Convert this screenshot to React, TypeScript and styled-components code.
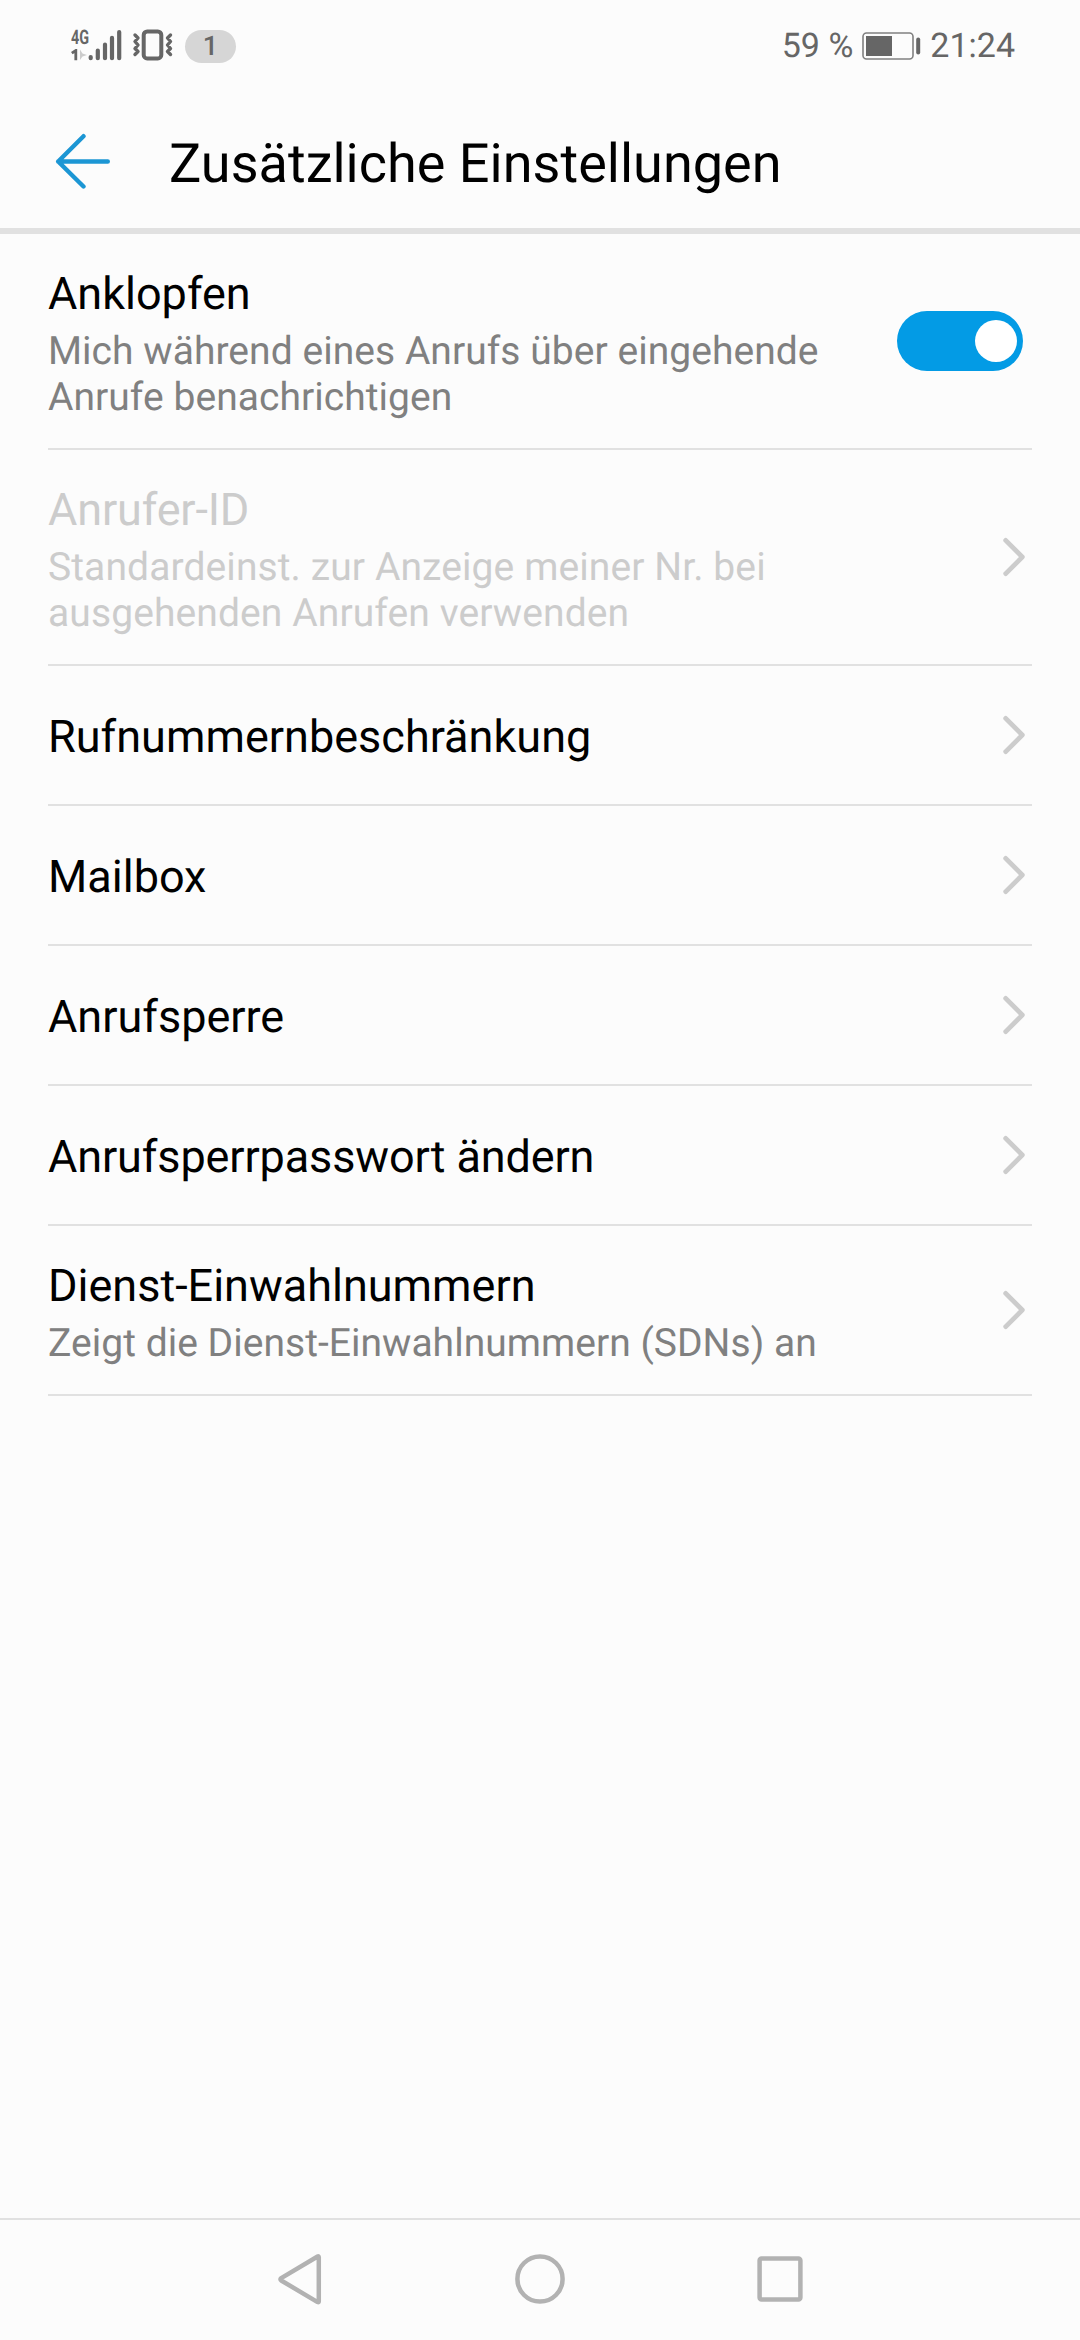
import React from 'react';
import styled, { createGlobalStyle } from 'styled-components';

const Global = createGlobalStyle`
  body { margin: 0; background: #fcfcfc; }
  * { box-sizing: border-box; }
`;

const Screen = styled.div`
  width: 1080px;
  height: 2340px;
  display: flex;
  flex-direction: column;
  overflow: hidden;
  background: #fcfcfc;
  color: #000;
  font-family: Roboto, sans-serif;
  text-rendering: geometricPrecision;
`;

const StatusBar = styled.div`
  height: 92px;
  padding: 0 65px 0 71px;
  display: flex;
  justify-content: space-between;
  align-items: center;
  color: #666;
  font-size: 34px;
  line-height: 40px;
`;

const StatusGroup = styled.div`
  display: flex;
  align-items: center;
`;

const Network = styled.div`
  display: flex;
  align-items: flex-end;
  width: 51px;
  height: 34px;
  margin-bottom: 4px;
`;

const NetworkLabels = styled.div`
  width: 17px;
  height: 34px;
  padding-top: 1px;
  display: flex;
  flex-direction: column;
  justify-content: space-between;
`;

const NetworkType = styled.span`
  font-size: 20px;
  line-height: 18px;
  font-weight: 700;
  transform: scaleX(0.72);
  transform-origin: left;
`;

const VibrateIcon = styled.svg`
  margin-left: 10px;
`;

const CountPill = styled.span`
  width: 51px;
  height: 33px;
  margin-left: 11px;
  border-radius: 17px;
  background: #d6d6d6;
  display: flex;
  align-items: center;
  justify-content: center;
  font-size: 27px;
  line-height: 33px;
  font-weight: 500;
`;

const BatteryIcon = styled.svg`
  margin: 0 9px 0 9px;
`;

const Header = styled.header`
  height: 142px;
  padding: 2px 48px 0 55px;
  display: flex;
  align-items: center;
  border-bottom: 6px solid #e1e1e1;
`;

const Title = styled.h1`
  margin: 8px 0 0 58px;
  font-size: 54px;
  line-height: 64px;
  font-weight: 400;
  letter-spacing: 0.02px;
`;

const List = styled.main`
  flex: 1;
  padding: 0 48px;
`;

const Row = styled.div<{ $height: number; $disabled?: boolean }>`
  height: ${(p) => p.$height}px;
  padding-right: 7px;
  display: flex;
  justify-content: space-between;
  align-items: center;
  border-bottom: 2px solid #e1e1e1;
  color: ${(p) => (p.$disabled ? '#ccc' : '#000')};
`;

const RowText = styled.div<{ $single: boolean }>`
  padding-top: ${(p) => (p.$single ? 3 : 5)}px;
`;

const RowTitle = styled.div<{ $tracking?: number }>`
  font-size: 45px;
  line-height: 53px;
  letter-spacing: ${(p) => p.$tracking ?? 0}px;
`;

const RowSummary = styled.div<{ $disabled?: boolean; $tracking?: number }>`
  width: 800px;
  margin-top: 8px;
  font-size: 39px;
  line-height: 46px;
  letter-spacing: ${(p) => p.$tracking ?? 0}px;
  color: ${(p) => (p.$disabled ? '#ccc' : '#808080')};
`;

const Switch = styled.span`
  width: 126px;
  height: 60px;
  margin-right: 2px;
  padding: 0 6px;
  border-radius: 30px;
  background: #039be5;
  display: flex;
  align-items: center;
  justify-content: flex-end;
`;

const Knob = styled.span`
  width: 42px;
  height: 42px;
  border-radius: 50%;
  background: #fff;
`;

const NavBar = styled.nav`
  height: 122px;
  border-top: 2px solid #e1e1e1;
  padding: 0 270px 2px;
  display: flex;
  justify-content: space-between;
  align-items: center;
`;

interface Item {
  title: string;
  summary?: string;
  height: number;
  disabled?: boolean;
  toggle?: boolean;
  titleTracking?: number;
  summaryTracking?: number;
}

const items: Item[] = [
  { title: 'Anklopfen', summary: 'Mich während eines Anrufs über eingehende Anrufe benachrichtigen', height: 216, toggle: true, summaryTracking: 0.045 },
  { title: 'Anrufer-ID', summary: 'Standardeinst. zur Anzeige meiner Nr. bei ausgehenden Anrufen verwenden', height: 216, disabled: true, titleTracking: -0.15, summaryTracking: 0.1 },
  { title: 'Rufnummernbeschränkung', height: 140, titleTracking: 0.02 },
  { title: 'Mailbox', height: 140 },
  { title: 'Anrufsperre', height: 140 },
  { title: 'Anrufsperrpasswort ändern', height: 140, titleTracking: -0.12 },
  { title: 'Dienst-Einwahlnummern', summary: 'Zeigt die Dienst-Einwahlnummern (SDNs) an', height: 170, summaryTracking: 0.03 },
];

const Chevron = () => (
  <svg width="24" height="40" viewBox="0 0 24 40" fill="none" stroke="#ccc" strokeWidth="4.8" strokeLinecap="round" strokeLinejoin="round">
    <path d="M4.700 3.400 21.300 20 4.700 36.600" />
  </svg>
);

export default function App() {
  return (
    <Screen>
      <Global />
      <StatusBar>
        <StatusGroup>
          <Network>
            <NetworkLabels>
              <NetworkType>4G</NetworkType>
              <svg width="17" height="12" viewBox="0 0 17 12">
                <path d="M.8 4.200 4.800 1.500V11.300" fill="none" stroke="#666" strokeWidth="2.800" />
                <path d="M9 .5v10.500l2.500-3.500L16 6l-4.500-1.500z" fill="#ccc" />
              </svg>
            </NetworkLabels>
            <svg width="34" height="32" viewBox="0 0 34 32" stroke="#666" strokeWidth="4.200" strokeLinecap="round">
              <path d="M2.700 28v1.200M9.800 21.500v7.700M17 15.500v13.700M24 8.800v20.400M31.200 3v26.200" />
            </svg>
          </Network>
          <VibrateIcon width="42" height="34" viewBox="0 0 42 34" fill="none" stroke="#666" strokeLinejoin="round" strokeLinecap="round">
            <rect x="11.700" y="2.400" width="17.600" height="27" rx="3.500" strokeWidth="4" />
            <path d="M3 6 6 9 3 12.500 6 16 3 19.500 6 22.500 3 25.500M38.500 6 35.500 9 38.500 12.500 35.500 16 38.500 19.500 35.500 22.500 38.500 25.500" strokeWidth="3.400" />
          </VibrateIcon>
          <CountPill>1</CountPill>
        </StatusGroup>
        <StatusGroup>
          <span>59 %</span>
          <BatteryIcon width="59" height="28" viewBox="0 0 59 28">
            <rect x="1" y="1" width="50" height="26" rx="3.500" fill="none" stroke="#808080" strokeWidth="1.600" />
            <rect x="4" y="4" width="26" height="20" fill="#666" />
            <path d="M56.200 7.500v13" stroke="#666" strokeWidth="4" strokeLinecap="round" />
          </BatteryIcon>
          <span>21:24</span>
        </StatusGroup>
      </StatusBar>
      <Header>
        <svg width="56" height="56" viewBox="0 0 56 56" fill="none" stroke="#1c96d4" strokeWidth="4.400" strokeLinecap="round" strokeLinejoin="round">
          <path d="M28.500 3.200 3.200 28.500l25.300 25M3.200 28.500h49.600" />
        </svg>
        <Title>Zusätzliche Einstellungen</Title>
      </Header>
      <List>
        {items.map((it) => (
          <Row key={it.title} $height={it.height} $disabled={it.disabled}>
            <RowText $single={!it.summary}>
              <RowTitle $tracking={it.titleTracking}>{it.title}</RowTitle>
              {it.summary && (
                <RowSummary $disabled={it.disabled} $tracking={it.summaryTracking}>{it.summary}</RowSummary>
              )}
            </RowText>
            {it.toggle ? <Switch><Knob /></Switch> : <Chevron />}
          </Row>
        ))}
      </List>
      <NavBar>
        <svg width="60" height="60" viewBox="0 0 60 60" fill="none" stroke="#b2b2b2" strokeWidth="4.500" strokeLinejoin="round">
          <path d="M47.600 7.500q1.200-.6 1.200.8v44q0 1.400-1.200.8L11.200 31.500q-1.600-1.200 0-2.400z" />
        </svg>
        <svg width="60" height="60" viewBox="0 0 60 60" fill="none" stroke="#b2b2b2" strokeWidth="4.500">
          <circle cx="30" cy="30" r="22.600" />
        </svg>
        <svg width="60" height="60" viewBox="0 0 60 60" fill="none" stroke="#b2b2b2" strokeWidth="4.500">
          <rect x="9.600" y="9.600" width="40.800" height="40.800" rx="2" />
        </svg>
      </NavBar>
    </Screen>
  );
}
